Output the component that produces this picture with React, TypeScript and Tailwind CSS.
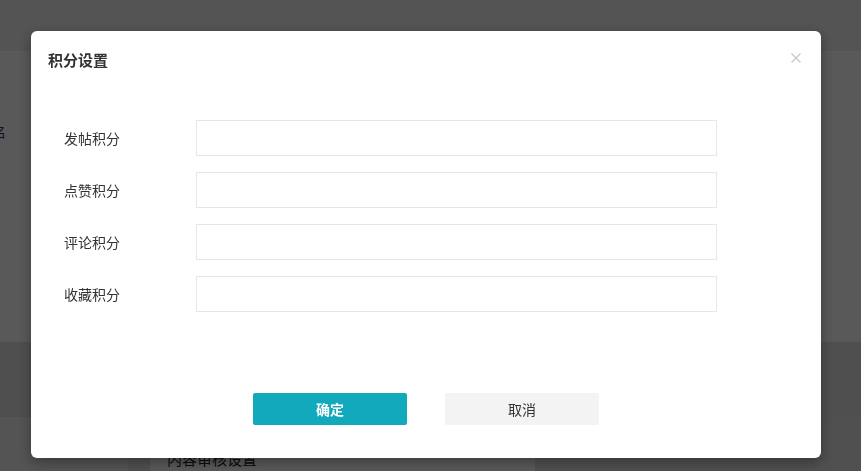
import React from "react";

const fields = ["发帖积分", "点赞积分", "评论积分", "收藏积分"];

const App = () => {
  return (
    <div
      className="relative h-screen w-full overflow-hidden bg-[#f0f0f0]"
      style={{ fontFamily: '"Noto Sans CJK SC", "Noto Sans", sans-serif' }}
    >
      {/* page behind the modal */}
      <div className="h-[51px] bg-[#f0f0f0]" />
      <div className="flex h-[291px] bg-white">
        <div className="flex w-[6px] justify-end overflow-hidden pt-[70px]">
          <span className="whitespace-nowrap text-[14px] text-[#1e3a5a]">路名</span>
        </div>
      </div>
      <div className="h-[75px] bg-[#e2e2e2]" />
      <div className="flex h-[60px]">
        <div className="w-[128px] bg-[#f0f0f0]" />
        <div className="w-[22px] bg-[#e4e4e4]" />
        <div className="w-[385px] bg-white pl-[17px] pt-[29px]">
          <span className="text-[15px] leading-[22px] text-[#222]">内容审核设置</span>
        </div>
        <div className="flex-1 bg-[#e4e4e4]" />
      </div>

      {/* overlay */}
      <div className="fixed inset-0 bg-black/[0.65] pl-[31px] pt-[31px]">
        <div className="flex h-[427px] w-[790px] flex-col rounded-[6px] bg-white shadow-[0_4px_14px_rgba(0,0,0,0.35)]">
          {/* header */}
          <div className="flex h-[40px] items-start justify-between pl-[17px] pr-[20px] pt-[18px]">
            <h3 className="text-[15px] font-bold leading-[22px] text-[#333]">积分设置</h3>
            <button className="mt-[4px] text-[#c8c8c8]">
              <svg width="10" height="10" viewBox="0 0 10 10">
                <path d="M0.5 0.5 L9.5 9.5 M9.5 0.5 L0.5 9.5" stroke="currentColor" strokeWidth="1.3" />
              </svg>
            </button>
          </div>

          {/* form */}
          <div className="mt-[49px] flex flex-col gap-[16px]">
            {fields.map((f) => (
              <div key={f} className="flex items-center">
                <label className="w-[165px] pl-[33px] text-[14px] text-[#333]">{f}</label>
                <input className="h-[36px] w-[521px] border border-[#e6e6e6] bg-white px-2 text-[14px] outline-none" />
              </div>
            ))}
          </div>

          {/* buttons */}
          <div className="mt-[81px] flex justify-center gap-[38px]">
            <button className="h-[32px] w-[154px] rounded-[2px] bg-[#12a9bc] text-[14px] font-semibold text-white">
              确定
            </button>
            <button className="h-[32px] w-[154px] rounded-[2px] bg-[#f3f3f3] text-[14px] text-[#333]">
              取消
            </button>
          </div>
        </div>
      </div>
    </div>
  );
};

export default App;
